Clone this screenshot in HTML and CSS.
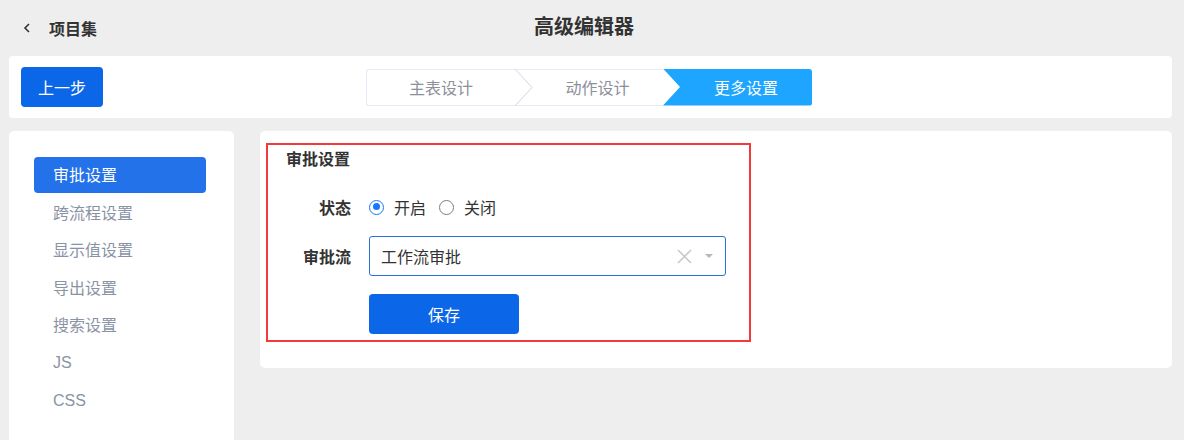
FILE: index.html
```html
<!DOCTYPE html>
<html lang="zh">
<head>
<meta charset="utf-8">
<title>高级编辑器</title>
<link rel="stylesheet" href="styles.css">
</head>
<body>
<header class="topbar">
  <div class="back">
    <svg class="back-icon" width="8" height="10" viewBox="0 0 8 10"><polyline points="6,1 2,5 6,9" fill="none" stroke="#333" stroke-width="1.6"/></svg>
    <span class="back-text">项目集</span>
  </div>
  <h1 class="page-title">高级编辑器</h1>
  <div></div>
</header>

<section class="toolbar">
  <div class="toolbar-left"><button class="btn btn-prev">上一步</button></div>
  <div class="steps">
    <div class="step step-first">主表设计</div>
    <div class="step step-mid">
      <svg class="step-sep" width="18" height="37" viewBox="0 0 18 37"><polyline points="0,0 17,18.5 0,37" fill="none" stroke="#d3d6dd" stroke-width="1"/></svg>
      动作设计
    </div>
    <div class="step step-active">更多设置</div>
  </div>
  <div></div>
</section>

<main class="content">
  <nav class="sidebar">
    <a class="menu-item active">审批设置</a>
    <a class="menu-item">跨流程设置</a>
    <a class="menu-item">显示值设置</a>
    <a class="menu-item">导出设置</a>
    <a class="menu-item">搜索设置</a>
    <a class="menu-item latin">JS</a>
    <a class="menu-item latin">CSS</a>
  </nav>
  <section class="panel">
    <div class="form-box">
      <h2 class="form-title">审批设置</h2>
      <div class="form-row row-status">
        <label class="form-label">状态</label>
        <div class="radios">
          <span class="radio checked"></span><span class="radio-text">开启</span>
          <span class="radio"></span><span class="radio-text">关闭</span>
        </div>
      </div>
      <div class="form-row row-flow">
        <label class="form-label">审批流</label>
        <div class="select">
          <span class="select-value">工作流审批</span>
          <svg class="select-clear" width="15" height="15" viewBox="0 0 15 15"><path d="M1 1L14 14M14 1L1 14" stroke="#c8c8c8" stroke-width="1.6" fill="none"/></svg>
          <svg class="select-caret" width="8" height="5" viewBox="0 0 8 5"><path d="M0 0H8L4 4Z" fill="#b8b8b8"/></svg>
        </div>
      </div>
      <div class="form-row row-save">
        <span class="form-label"></span>
        <button class="btn btn-save">保存</button>
      </div>
    </div>
  </section>
</main>
</body>
</html>
```

FILE: styles.css
```css
* { box-sizing: border-box; }
html, body { margin: 0; padding: 0; }
body {
  background: #eeeeee;
  font-family: "Liberation Sans", "Noto Sans CJK SC", sans-serif;
  font-size: 16px;
  color: #333;
  width: 1184px;
  height: 440px;
  overflow: hidden;
}

.topbar {
  height: 56px;
  display: grid;
  grid-template-columns: 1fr auto 1fr;
  align-items: center;
  padding-right: 16px;
}
.back {
  display: flex;
  align-items: center;
  padding-left: 23px;
}
.back-icon { display: block; }
.back-text {
  margin-left: 18px;
  font-size: 16px;
  font-weight: bold;
  color: #333;
}
.page-title {
  margin: 0;
  font-size: 20px;
  font-weight: bold;
  color: #333;
  padding-bottom: 6px;
}

.toolbar {
  margin-left: 9px;
  width: 1163px;
  height: 62px;
  background: #fff;
  border-radius: 4px;
  display: grid;
  grid-template-columns: 1fr auto 1fr;
  align-items: center;
  padding: 0 12px;
}
.btn {
  border: none;
  font-family: inherit;
  font-size: 16px;
  color: #fff;
  cursor: pointer;
}
.btn-prev {
  width: 82px;
  height: 40px;
  background: #0c67e8;
  border-radius: 4px;
}
.steps {
  display: flex;
  height: 37px;
  margin-right: 3px;
}
.step {
  position: relative;
  height: 37px;
  display: flex;
  align-items: center;
  justify-content: center;
  color: #8b909a;
  font-size: 16px;
  border-top: 1px solid #e3ebf6;
  border-bottom: 1px solid #e3ebf6;
}
.step-first {
  width: 149px;
  border-left: 1px solid #e3ebf6;
  border-radius: 3px 0 0 3px;
}
.step-mid {
  width: 148px;
  padding-left: 17px;
}
.step-sep {
  position: absolute;
  left: 0;
  top: -1px;
}
.step-active {
  width: 149px;
  padding-left: 17px;
  background: #1ea5ff;
  color: #fff;
  border: none;
  border-radius: 0 3px 3px 0;
  clip-path: polygon(0 0, 100% 0, 100% 100%, 0 100%, 17px 50%);
}

.content {
  display: flex;
  gap: 26px;
  margin-top: 13px;
  margin-left: 9px;
}
.sidebar {
  width: 225px;
  height: 330px;
  background: #fff;
  border-radius: 5px;
  padding: 26px 0 0 25px;
  display: flex;
  flex-direction: column;
}
.menu-item {
  width: 172px;
  height: 37.5px;
  display: flex;
  align-items: center;
  padding-left: 19px;
  padding-bottom: 3px;
  color: #8a93a5;
  font-size: 16px;
  border-radius: 4px;
}
.menu-item.latin { padding-bottom: 0; }
.menu-item.active {
  height: 36px;
  margin-bottom: 1.5px;
  background: #2372ea;
  color: #fff;
}

.panel {
  width: 912px;
  height: 237px;
  background: #fff;
  border-radius: 5px;
  padding: 12px 0 0 6px;
}
.form-box {
  width: 485px;
  height: 199px;
  border: 2px solid #f23a3a;
  padding: 3px 0 0 0;
}
.form-title {
  margin: 0 0 0 18px;
  font-size: 16px;
  font-weight: bold;
  color: #333;
  height: 24px;
  line-height: 24px;
}
.form-row {
  display: flex;
  align-items: center;
}
.form-label {
  width: 83px;
  text-align: right;
  margin-right: 18px;
  font-weight: bold;
  color: #333;
  font-size: 16px;
  flex: none;
}
.row-status { margin-top: 15px; height: 40px; }
.row-flow { margin-top: 9px; height: 40px; }
.row-save { margin-top: 18px; }

.radios {
  display: flex;
  align-items: center;
}
.radio {
  width: 15px;
  height: 15px;
  border-radius: 50%;
  border: 1px solid #7d7d7d;
  display: inline-block;
  position: relative;
}
.radio.checked {
  border: 1.5px solid #1677ff;
}
.radio.checked::after {
  content: "";
  position: absolute;
  left: 2.5px;
  top: 2.5px;
  width: 7px;
  height: 7px;
  border-radius: 50%;
  background: #1677ff;
}
.radio-text {
  margin-left: 10px;
  margin-right: 13px;
  color: #333;
}

.select {
  width: 357px;
  height: 40px;
  border: 1px solid #2a70da;
  border-radius: 3px;
  display: flex;
  align-items: center;
  padding-left: 11px;
}
.select-value {
  flex: 1;
  color: #333;
}
.select-clear { margin-right: 13px; }
.select-caret { margin-right: 12px; }

.btn-save {
  width: 150px;
  height: 40px;
  background: #0c66e8;
  border-radius: 4px;
}
```
